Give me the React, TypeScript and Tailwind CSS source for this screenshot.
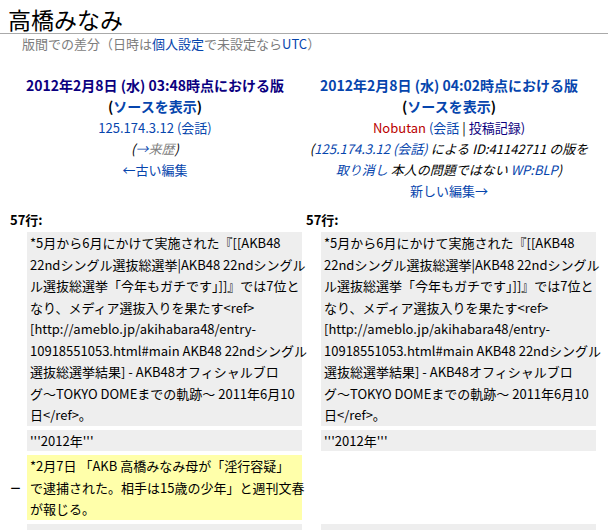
import React from "react";

const font = { fontFamily: '"Noto Sans CJK JP", "Liberation Sans", sans-serif' };

const contextLines = [
  "*5月から6月にかけて実施された『[[AKB48",
  "22ndシングル選抜総選挙|AKB48 22ndシングル",
  "ル選抜総選挙「今年もガチです」]]』では7位と",
  "なり、メディア選抜入りを果たす<ref>",
  "[http://ameblo.jp/akihabara48/entry-",
  "10918551053.html#main AKB48 22ndシングル",
  "選抜総選挙結果] - AKB48オフィシャルブロ",
  "グ〜TOKYO DOMEまでの軌跡〜 2011年6月10",
  "日</ref>。",
];

const deletedLines = [
  "*2月7日 「AKB 高橋みなみ母が「淫行容疑」",
  "で逮捕された。相手は15歳の少年」と週刊文春",
  "が報じる。",
];

function Lines({ lines }: { lines: string[] }) {
  return (
    <>
      {lines.map((l, i) => (
        <div key={i} className="whitespace-pre">
          {l}
        </div>
      ))}
    </>
  );
}

function Cell({ lines, tone }: { lines: string[]; tone: "ctx" | "del" | "none" }) {
  const bg = tone === "ctx" ? "bg-[#eeeeee]" : tone === "del" ? "bg-[#ffffaa]" : "";
  return <div className={`${bg} pl-[3px] text-[13px] leading-[21.5px] text-black`}>{lines.length ? <Lines lines={lines} /> : null}</div>;
}

export default function App() {
  return (
    <div className="w-[608px] h-[530px] overflow-hidden bg-white text-black" style={font}>
      <h1 className="pl-2 pt-[5px] text-[23px] leading-[28px] font-normal border-b border-[#aaaaaa]">高橋みなみ</h1>
      <div className="pl-[22px] text-[13px] leading-[20px] text-[#7d7d7d]">
        版間での差分（日時は<span className="text-[#0645ad]">個人設定</span>で未設定なら<span className="text-[#0645ad]">UTC</span>）
      </div>

      <div className="ml-2 mt-[21px] w-[588px]">
        {/* revision headers */}
        <div className="grid grid-cols-[294px_294px] text-[13px] leading-[21px] text-center">
          <div>
            <div className="font-bold text-[14px] text-[#0b0080]">2012年2月8日 (水) 03:48時点における版</div>
            <div className="font-bold text-[14px]">(<span className="text-[#0645ad]">ソースを表示</span>)</div>
            <div className="text-[#0645ad]">125.174.3.12 (会話)</div>
            <div className="italic">
              (<span className="text-[#0645ad]">→</span><span className="text-[#808080]">来歴</span>)
            </div>
            <div className="text-[#0645ad]">←古い編集</div>
          </div>
          <div>
            <div className="font-bold text-[14px] text-[#0645ad]">2012年2月8日 (水) 04:02時点における版</div>
            <div className="font-bold text-[14px]">(<span className="text-[#0645ad]">ソースを表示</span>)</div>
            <div>
              <span className="text-[#ba0000]">Nobutan</span>{" "}
              <span className="text-[#0645ad]">(会話</span> | <span className="text-[#0b0080]">投稿記録)</span>
            </div>
            <div className="italic">
              (<span className="text-[#0645ad]">125.174.3.12</span> <span className="text-[#0645ad]">(会話)</span> による ID:41142711 の版を
            </div>
            <div className="italic">
              <span className="text-[#0645ad]">取り消し</span> 本人の問題ではない <span className="text-[#0645ad]">WP:BLP</span>)
            </div>
            <div className="text-[#0645ad]">新しい編集→</div>
          </div>
        </div>

        {/* line numbers */}
        <div className="mt-[8px] grid grid-cols-[294px_294px] text-[13px] leading-[21px] font-bold">
          <div className="pl-[2px]">57行:</div>
          <div className="pl-[4px]">57行:</div>
        </div>

        {/* diff rows */}
        <div className="mt-[2px] grid grid-cols-[19px_275px_19px_275px] gap-y-[4px]">
          <div />
          <Cell lines={contextLines} tone="ctx" />
          <div />
          <Cell lines={contextLines} tone="ctx" />

          <div />
          <Cell lines={["'''2012年'''"]} tone="ctx" />
          <div />
          <Cell lines={["'''2012年'''"]} tone="ctx" />

          <div className="flex items-center justify-center pr-[4px] text-[18px] leading-[21.5px]">−</div>
          <Cell lines={deletedLines} tone="del" />
          <div />
          <div />

          <div />
          <Cell lines={[" "]} tone="ctx" />
          <div />
          <Cell lines={[" "]} tone="ctx" />
        </div>
      </div>
    </div>
  );
}
